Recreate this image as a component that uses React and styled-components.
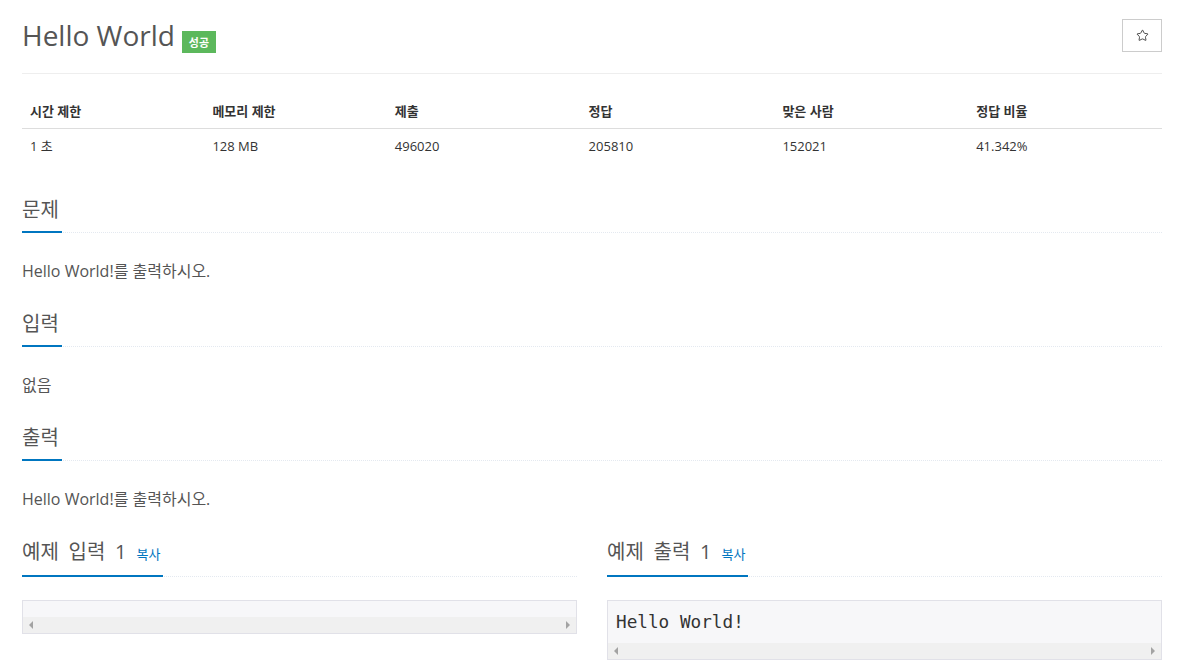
import React from "react";
import styled, { createGlobalStyle } from "styled-components";
import { Star } from "lucide-react";

const Global = createGlobalStyle`
  html, body { margin: 0; padding: 0; background: #fff; }
  body {
    font-family: "Open Sans", "Noto Sans CJK KR", sans-serif;
    color: #555;
    font-size: 13px;
  }
  * { box-sizing: border-box; }
`;

const Page = styled.div`
  padding: 0 20px 0 22px;
  width: 1182px;
`;

const Header = styled.header`
  display: flex;
  justify-content: space-between;
  align-items: flex-start;
  padding-top: 19px;
  padding-bottom: 20px;
  border-bottom: 1px solid #eee;
`;

const TitleRow = styled.div`
  display: flex;
  align-items: flex-start;
  gap: 7px;
`;

const Title = styled.h1`
  margin: 0;
  font-size: 28px;
  font-weight: 400;
  line-height: 33px;
  color: #555;
`;

const Badge = styled.span`
  margin-top: 12px;
  display: inline-flex;
  align-items: center;
  justify-content: center;
  width: 34px;
  height: 22px;
  background: #5cb85c;
  color: #fff;
  font-size: 11px;
  font-weight: 700;
  font-family: "Noto Sans CJK KR", sans-serif;
`;

const StarButton = styled.button`
  width: 40px;
  height: 33px;
  border: 1px solid #ccc;
  background: #fff;
  display: flex;
  align-items: center;
  justify-content: center;
  padding: 0;
  color: #333;
  cursor: pointer;
`;

const Table = styled.table`
  width: 100%;
  margin-top: 20px;
  border-collapse: collapse;
  table-layout: fixed;
  color: #333;
`;

const Th = styled.th`
  text-align: left;
  font-weight: 700;
  font-size: 13px;
  line-height: 19px;
  padding: 8px 8px 7px 8px;
  border-bottom: 1px solid #ddd;
  width: ${(p) => p.$w};
`;

const Td = styled.td`
  font-size: 13px;
  line-height: 19px;
  padding: 8px 8px 7px 8px;
`;

const Section = styled.section`
  margin-top: ${(p) => p.$top}px;
`;

const Headline = styled.div`
  border-bottom: 1px dotted #e4e9f0;
`;

const H2 = styled.h2`
  display: inline-flex;
  align-items: baseline;
  gap: 10px;
  margin: 0 0 -1px 0;
  padding: 0 3px 10px 0;
  border-bottom: 2px solid #0076c0;
  font-size: 20px;
  font-weight: 400;
  line-height: 22px;
  word-spacing: 4.5px;
  color: #555;
`;

const CopyLink = styled.a`
  font-size: 13px;
  color: #0076c0;
  text-decoration: none;
  word-spacing: 0;
  font-family: "Noto Sans CJK KR", sans-serif;
`;

const Paragraph = styled.p`
  margin: 26px 0 0 0;
  font-size: 16px;
  line-height: 24px;
  color: #555;
`;

const SampleGrid = styled.div`
  display: grid;
  grid-template-columns: 1fr 1fr;
  column-gap: 30px;
  margin-top: 30px;
`;

const SampleBox = styled.div`
  margin-top: 23px;
  border: 1px solid #e1e1e8;
  background: #f7f7f9;
`;

const Pre = styled.pre`
  margin: 0;
  padding: 8px 8px 7px 8px;
  font-family: "DejaVu Sans Mono", "Liberation Mono", monospace;
  font-size: 17.7px;
  line-height: 27px;
  color: #333;
  overflow: hidden;
  white-space: pre;
  &:empty {
    padding-bottom: 8px;
  }
`;

const ScrollBar = styled.div`
  height: 16px;
  background: #f0f0f0;
  display: flex;
  justify-content: space-between;
  align-items: center;
`;

const Arrow = styled.span`
  width: 16px;
  height: 16px;
  display: flex;
  align-items: center;
  justify-content: center;
  &::before {
    content: "";
    width: 0;
    height: 0;
    border-top: 4px solid transparent;
    border-bottom: 4px solid transparent;
    ${(p) =>
      p.$dir === "left"
        ? "border-right: 4px solid #a3a3a3;"
        : "border-left: 4px solid #a3a3a3;"}
  }
`;

const stats = [
  ["시간 제한", "1 초", "16%"],
  ["메모리 제한", "128 MB", "16%"],
  ["제출", "496020", "17%"],
  ["정답", "205810", "17%"],
  ["맞은 사람", "152021", "17%"],
  ["정답 비율", "41.342%", "17%"],
];

const sections = [
  { title: "문제", body: "Hello World!를 출력하시오.", top: 36 },
  { title: "입력", body: "없음", top: 30 },
  { title: "출력", body: "Hello World!를 출력하시오.", top: 30 },
];

function Sample({ title, content }) {
  return (
    <div>
      <Headline>
        <H2>
          {title}
          <CopyLink href="#">복사</CopyLink>
        </H2>
      </Headline>
      <SampleBox>
        <Pre>{content}</Pre>
        <ScrollBar>
          <Arrow $dir="left" />
          <Arrow $dir="right" />
        </ScrollBar>
      </SampleBox>
    </div>
  );
}

export default function App() {
  return (
    <>
      <Global />
      <Page>
        <Header>
          <TitleRow>
            <Title>Hello World</Title>
            <Badge>성공</Badge>
          </TitleRow>
          <StarButton aria-label="즐겨찾기">
            <Star size={13} strokeWidth={1.6} />
          </StarButton>
        </Header>
        <Table>
          <thead>
            <tr>
              {stats.map(([h, , w]) => (
                <Th key={h} $w={w}>
                  {h}
                </Th>
              ))}
            </tr>
          </thead>
          <tbody>
            <tr>
              {stats.map(([h, v]) => (
                <Td key={h}>{v}</Td>
              ))}
            </tr>
          </tbody>
        </Table>
        {sections.map((s) => (
          <Section key={s.title} $top={s.top}>
            <Headline>
              <H2>{s.title}</H2>
            </Headline>
            <Paragraph>{s.body}</Paragraph>
          </Section>
        ))}
        <SampleGrid>
          <Sample title="예제 입력 1" content="" />
          <Sample title="예제 출력 1" content="Hello World!" />
        </SampleGrid>
      </Page>
    </>
  );
}
